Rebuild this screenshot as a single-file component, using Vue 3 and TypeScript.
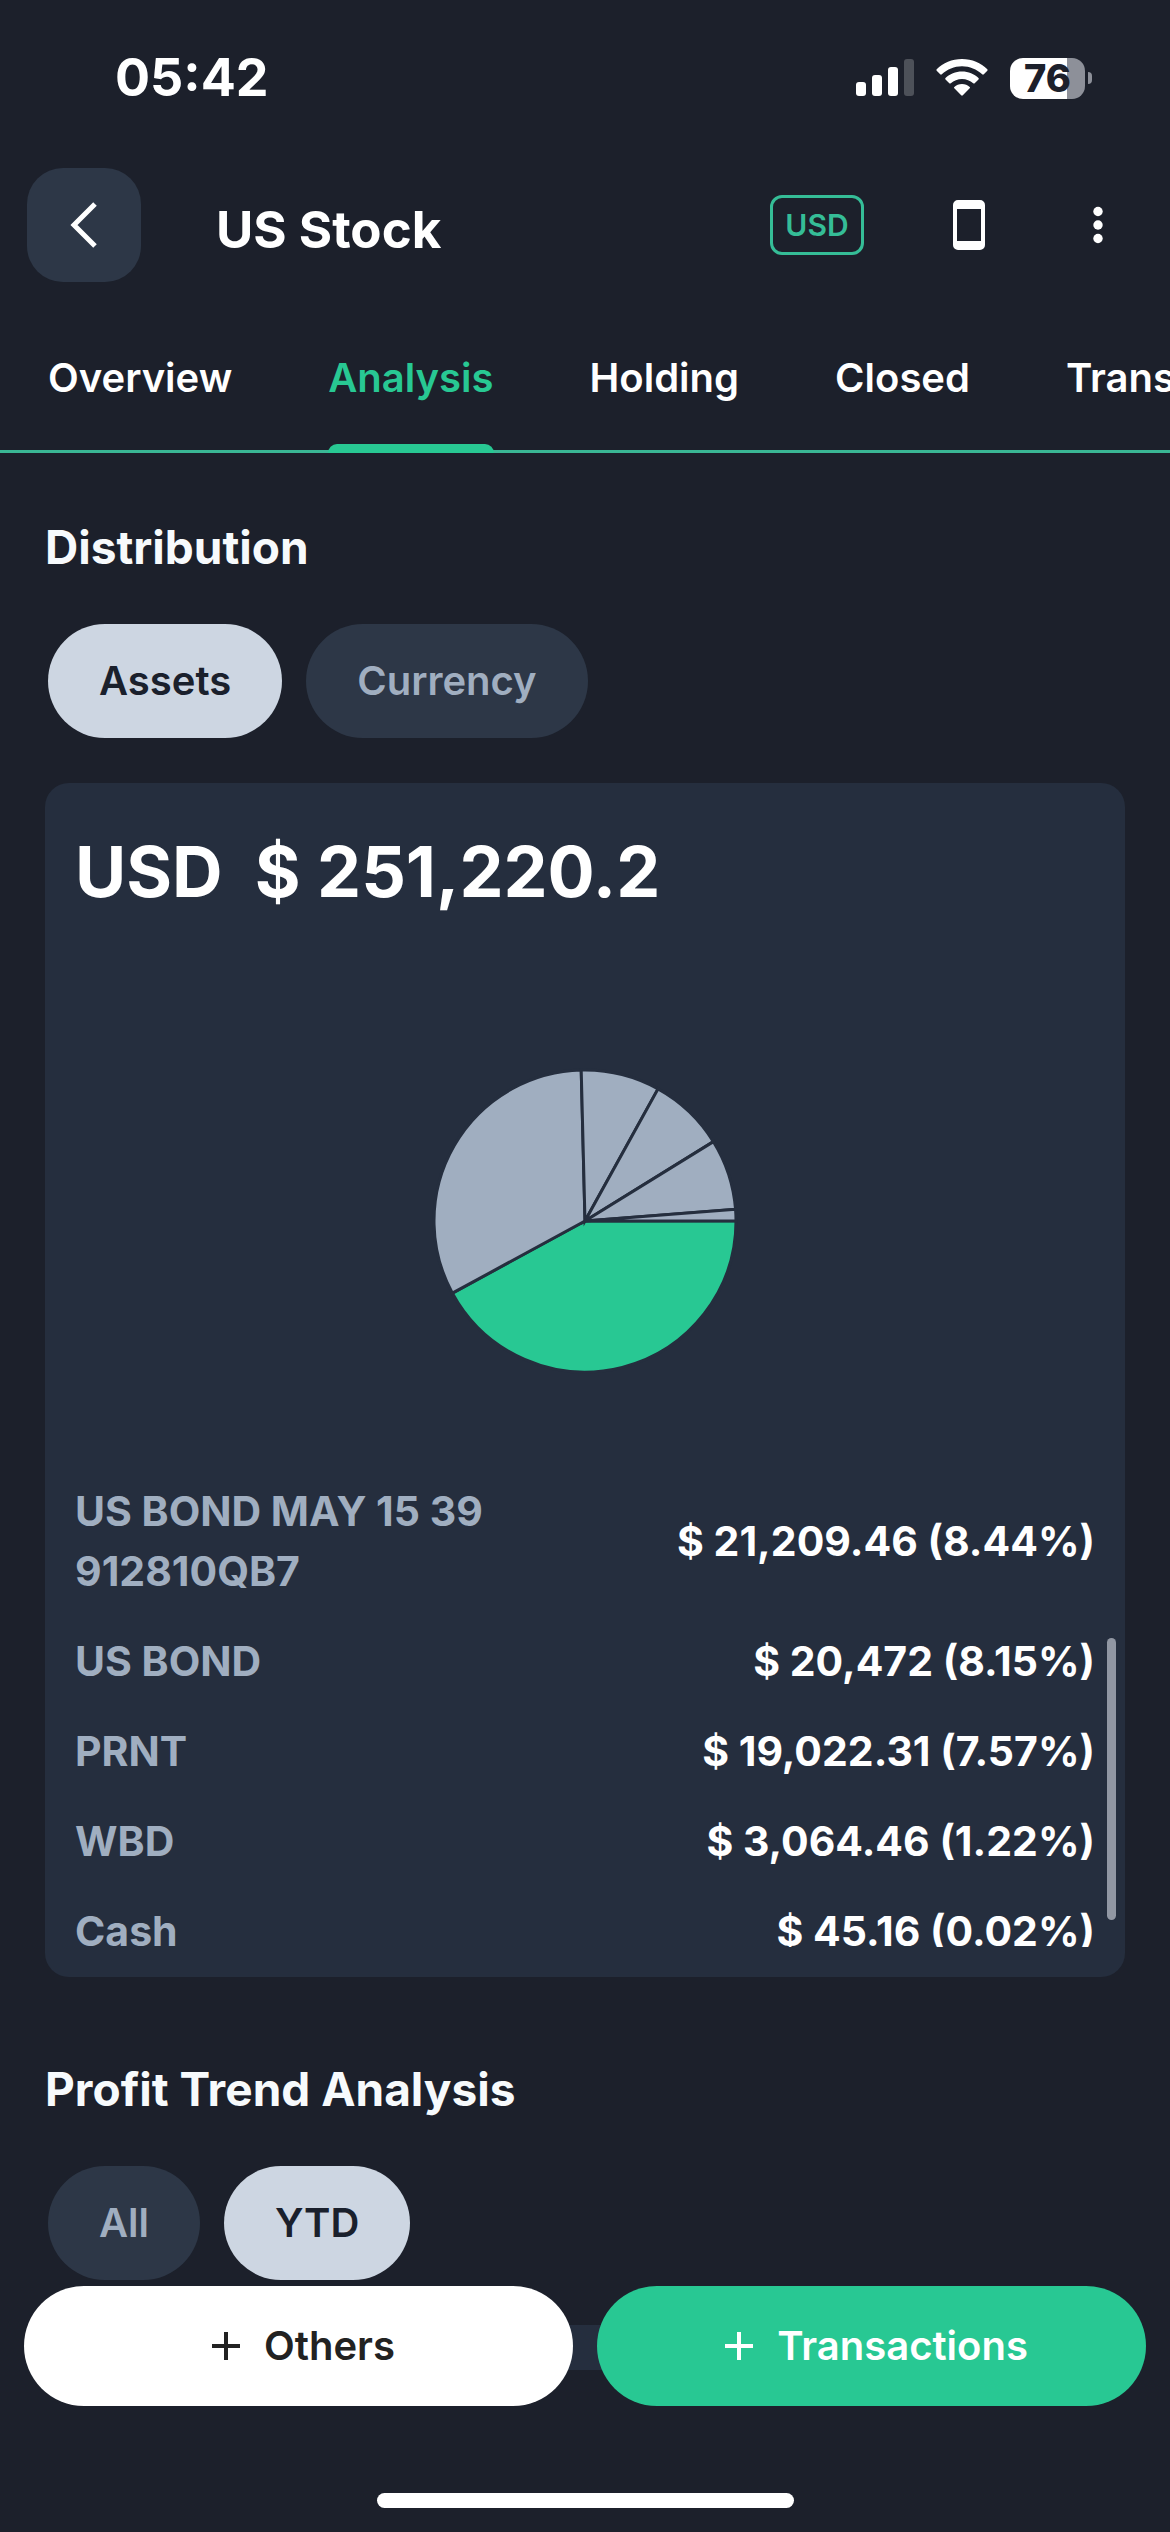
<script setup lang="ts">
import { computed, ref } from 'vue'

interface Holding {
  name: string
  value: string
  share: number
}

const tabs = ['Overview', 'Analysis', 'Holding', 'Closed', 'Transactions']
const activeTab = ref('Analysis')

const groupings = ['Assets', 'Currency']
const activeGrouping = ref('Assets')

const periods = ['All', 'YTD']
const activePeriod = ref('YTD')

const holdings: Holding[] = [
  { name: 'US BOND MAY 15 39 912810QB7', value: '21,209.46', share: 8.44 },
  { name: 'US BOND', value: '20,472', share: 8.15 },
  { name: 'PRNT', value: '19,022.31', share: 7.57 },
  { name: 'WBD', value: '3,064.46', share: 1.22 },
  { name: 'Cash', value: '45.16', share: 0.02 },
]

const largestShares = [42.07, 32.53]
const radius = 151

// Pie slices run clockwise from three o'clock, largest first.
const slices = computed(() => {
  const shares = [...largestShares, ...holdings.slice(0, 4).map((h) => h.share)]
  let start = 0
  return shares.map((share, index) => {
    const end = start + (share / 100) * Math.PI * 2
    const large = end - start > Math.PI ? 1 : 0
    const point = (a: number) => `${(Math.cos(a) * radius).toFixed(2)} ${(Math.sin(a) * radius).toFixed(2)}`
    const d = `M0 0 L${point(start)} A${radius} ${radius} 0 ${large} 1 ${point(end)} Z`
    start = end
    return { d, main: index === 0 }
  })
})
</script>

<template>
  <div class="app">
    <div class="status">
      <span class="time">05:42</span>
      <div class="indicators">
        <svg class="signal" width="58" height="38" viewBox="0 0 58 38" aria-hidden="true">
          <rect x="0" y="23" width="10" height="14" rx="3" />
          <rect x="16" y="16" width="10" height="21" rx="3" />
          <rect x="32" y="8" width="10" height="29" rx="3" />
          <rect x="48" y="0" width="10" height="37" rx="3" opacity="0.22" />
        </svg>
        <svg class="wifi" width="52" height="38" viewBox="0 0 52 38" aria-hidden="true">
          <path d="M26 0C36 0 45 4 51.300 10.300Q52 11 51.300 11.700L47.800 15.300Q47 16 46.200 15.300C40.700 10.200 33.800 7.200 26 7.200S11.300 10.200 5.800 15.300Q5 16 4.200 15.300L.7 11.700Q0 11 .7 10.300C7 4 16 0 26 0Z" />
          <path d="M26 12.500C32.500 12.500 38.200 15 42.500 19Q43.200 19.700 42.500 20.400L38.700 24.200Q38 24.800 37.200 24.200C34.200 21.500 30.300 19.900 26 19.900S17.800 21.500 14.800 24.200Q14 24.800 13.300 24.200L9.500 20.400Q8.800 19.700 9.500 19C13.800 15 19.500 12.500 26 12.500Z" />
          <path d="M26 25C29 25 31.700 26 33.700 27.900Q34.400 28.600 33.700 29.300L26.800 36.300Q26 37 25.200 36.300L18.300 29.300Q17.600 28.600 18.300 27.900C20.300 26 23 25 26 25Z" />
        </svg>
        <div class="battery">
          <span class="battery-body">76</span>
          <span class="battery-nub"></span>
        </div>
      </div>
    </div>

    <header class="header">
      <button class="back" type="button" aria-label="Back">
        <svg width="30" height="48" viewBox="0 0 30 48" aria-hidden="true">
          <path d="M26 3L5 24L26 45" fill="none" stroke="currentColor" stroke-width="5" />
        </svg>
      </button>
      <h1 class="title">US Stock</h1>
      <button class="currency" type="button">USD</button>
      <button class="icon-button" type="button" aria-label="Device view">
        <svg width="32" height="50" viewBox="0 0 32 50" aria-hidden="true">
          <path fill="currentColor" fill-rule="evenodd" d="M5 0H27A5 5 0 0 1 32 5V45A5 5 0 0 1 27 50H5A5 5 0 0 1 0 45V5A5 5 0 0 1 5 0ZM4 9V41H28V9Z" />
        </svg>
      </button>
      <button class="icon-button more" type="button" aria-label="More">
        <svg width="10" height="38" viewBox="0 0 10 38" fill="currentColor" aria-hidden="true">
          <circle cx="5" cy="5.500" r="4.700" />
          <circle cx="5" cy="19" r="4.700" />
          <circle cx="5" cy="32.500" r="4.700" />
        </svg>
      </button>
    </header>

    <nav class="tabs">
      <button
        v-for="tab in tabs"
        :key="tab"
        type="button"
        class="tab"
        :class="{ active: tab === activeTab }"
        @click="activeTab = tab"
      >{{ tab }}</button>
    </nav>

    <main class="content">
      <section class="section">
        <h2>Distribution</h2>
        <div class="chips">
          <button
            v-for="item in groupings"
            :key="item"
            type="button"
            class="chip"
            :class="{ selected: item === activeGrouping }"
            @click="activeGrouping = item"
          >{{ item }}</button>
        </div>
        <div class="card">
          <p class="total"><span>USD</span><span>$ 251,220.2</span></p>
          <svg class="pie" viewBox="-153 -153 306 306" role="img" aria-label="Asset distribution">
            <path v-for="(slice, i) in slices" :key="i" :d="slice.d" class="slice" :class="{ main: slice.main }" />
          </svg>
          <div class="list-wrap">
            <ul class="list">
              <li v-for="item in holdings" :key="item.name">
                <span class="name">{{ item.name }}</span>
                <span class="value">$ {{ item.value }} ({{ item.share }}%)</span>
              </li>
            </ul>
            <span class="thumb"></span>
          </div>
        </div>
      </section>

      <section class="section">
        <h2>Profit Trend Analysis</h2>
        <div class="chips">
          <button
            v-for="item in periods"
            :key="item"
            type="button"
            class="chip"
            :class="{ selected: item === activePeriod }"
            @click="activePeriod = item"
          >{{ item }}</button>
        </div>
        <div class="card trend"></div>
      </section>
    </main>

    <footer class="footer">
      <div class="actions">
        <button class="action light" type="button">
          <svg width="28" height="28" viewBox="0 0 28 28" aria-hidden="true">
            <path d="M14 0V28M0 14H28" stroke="currentColor" stroke-width="4" />
          </svg>
          Others
        </button>
        <button class="action green" type="button">
          <svg width="28" height="28" viewBox="0 0 28 28" aria-hidden="true">
            <path d="M14 0V28M0 14H28" stroke="currentColor" stroke-width="4" />
          </svg>
          Transactions
        </button>
      </div>
      <div class="home-indicator"></div>
    </footer>
  </div>
</template>

<style>
body {
  background: #1c202b;
}
</style>

<style scoped>
.app {
  display: flex;
  flex-direction: column;
  height: 100vh;
  overflow: hidden;
  background: #1c202b;
  color: #fff;
  font-family: Inter, "Liberation Sans", sans-serif;
  font-size: 40px;
  font-weight: 600;
  line-height: 60px;
}

.app *,
.app *::after {
  box-sizing: border-box;
}

button {
  margin: 0;
  padding: 0;
  border: 0;
  background: none;
  color: inherit;
  font: inherit;
  white-space: nowrap;
}

svg {
  display: block;
}

.status {
  flex: none;
  display: flex;
  align-items: center;
  justify-content: space-between;
  height: 141px;
  padding: 15px 78px 0 115px;
}

.time {
  font-size: 52px;
  font-weight: 700;
}

.indicators {
  display: flex;
  align-items: center;
  gap: 22px;
}

.indicators svg {
  fill: #fff;
}

.battery {
  display: flex;
  align-items: center;
  gap: 3px;
}

.battery-body {
  width: 75px;
  height: 41px;
  border-radius: 13px;
  background: linear-gradient(to right, #fff 57px, #8d9099 57px);
  color: #1c202b;
  font-size: 38px;
  font-weight: 800;
  line-height: 41px;
  text-align: center;
}

.battery-nub {
  width: 4px;
  height: 12px;
  border-radius: 0 4px 4px 0;
  background: #8d9099;
}

.header {
  flex: none;
  display: flex;
  align-items: center;
  height: 168px;
  padding: 0 27px;
}

.back {
  display: flex;
  align-items: center;
  justify-content: center;
  width: 114px;
  height: 114px;
  border-radius: 36px;
  background: #2d3747;
}

.title {
  flex: 1;
  margin: 0 0 0 75px;
  padding-top: 9px;
  font-size: 51px;
  font-weight: 650;
}

.currency {
  width: 94px;
  height: 60px;
  border: 3px solid #35bd97;
  border-radius: 12px;
  color: #35bd97;
  font-size: 30px;
  line-height: 54px;
}

.icon-button {
  display: flex;
  justify-content: center;
  width: 90px;
  margin-left: 60px;
}

.more {
  margin-left: 39px;
}

.tabs {
  flex: none;
  display: flex;
  gap: 96px;
  height: 144px;
  padding: 0 48px;
  border-bottom: 3px solid #3ab795;
  overflow: hidden;
  overflow: clip;
  overflow-clip-margin: border-box;
}

.tab {
  position: relative;
  flex: none;
  padding: 39px 0 42px;
}

.tab.active {
  color: #28c893;
}

.tab.active::after {
  content: "";
  position: absolute;
  right: 0;
  bottom: -3px;
  left: 0;
  height: 9px;
  border-radius: 9px 9px 0 0;
  background: #28c893;
}

.content {
  flex: 1;
  min-height: 0;
  overflow-y: auto;
  scrollbar-width: none;
}

.section {
  padding: 58px 45px 18px;
}

h2 {
  margin: 0 0 41px;
  color: #f7fafc;
  font-size: 46px;
  font-weight: 650;
  line-height: 72px;
}

.chips {
  display: flex;
  gap: 24px;
  margin: 0 3px 45px;
}

.chip {
  height: 114px;
  padding: 0 51px;
  border-radius: 57px;
  background: #2d3747;
  color: #a0aec0;
}

.chip.selected {
  background: #cdd6e2;
  color: #1a202c;
}

.card {
  padding: 44px 30px 30px;
  border-radius: 24px;
  background: #252e3e;
}

.total {
  display: flex;
  gap: 32px;
  margin: 0;
  font-size: 70px;
  font-weight: 650;
  line-height: 90px;
}

.pie {
  width: 306px;
  margin: 151px auto 107px;
}

.slice {
  fill: #a0aec0;
  stroke: #252e3e;
  stroke-width: 3;
}

.slice.main {
  fill: #28c893;
}

.list-wrap {
  position: relative;
}

.list {
  display: flex;
  flex-direction: column;
  gap: 30px;
  max-height: 466px;
  margin: 0;
  padding: 0;
  overflow-y: auto;
  scrollbar-width: none;
  font-size: 41px;
  font-weight: 650;
  list-style: none;
}

.list li {
  flex: none;
  display: flex;
  align-items: center;
  justify-content: space-between;
}

.name {
  max-width: 45%;
  color: #a0aec0;
}

.value {
  white-space: nowrap;
}

.thumb {
  position: absolute;
  right: -21px;
  bottom: 27px;
  width: 9px;
  height: 282px;
  border-radius: 5px;
  background: #9197a3;
}

.trend {
  min-height: 600px;
}

.footer {
  position: relative;
  flex: none;
  display: flex;
  flex-direction: column;
  align-items: center;
  justify-content: space-between;
  margin-top: -84px;
  padding-bottom: 24px;
  height: 246px;
}

.actions {
  display: flex;
  gap: 24px;
  width: 100%;
  padding: 0 24px;
}

.action {
  flex: 1;
  display: flex;
  align-items: center;
  justify-content: center;
  gap: 24px;
  height: 120px;
  padding-left: 10px;
  border-radius: 60px;
}

.light {
  background: #fff;
  color: #222;
}

.green {
  background: #28c893;
}

.home-indicator {
  width: 417px;
  height: 15px;
  border-radius: 8px;
  background: #fff;
}
</style>
